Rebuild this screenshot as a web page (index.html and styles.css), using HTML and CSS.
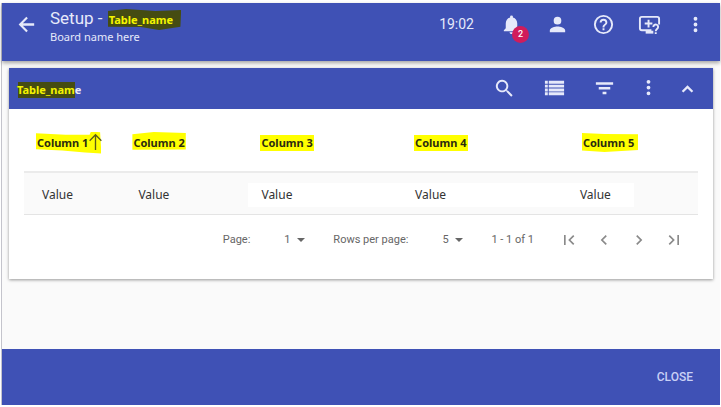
FILE: index.html
```html
<!DOCTYPE html>
<html lang="en">
<head>
<meta charset="utf-8">
<title>Setup</title>
<link rel="stylesheet" href="styles.css">
</head>
<body>
<div class="window">
  <header class="appbar">
    <button class="icon-btn back" aria-label="Back"><svg viewBox="0 0 24 24"><path d="M20 10.800H8.200l5.200-5.200L11.800 4l-8 8 8 8 1.600-1.600-5.200-5.200H20z"/></svg></button>
    <div class="titles">
      <h1>Setup - <span class="mark mark-dark mark-title">Table_name</span></h1>
      <p>Board name here</p>
    </div>
    <time class="clock">19:02</time>
    <nav class="actions">
      <button class="icon-btn bell" aria-label="Notifications"><svg viewBox="0 0 24 24"><path d="M12 22c1.100 0 2-.9 2-2h-4c0 1.100.9 2 2 2zm6-6v-5c0-3.070-1.640-5.640-4.500-6.320V4a1.500 1.500 0 0 0-3 0v.68C7.630 5.360 6 7.920 6 11v5l-2 2v1h16v-1z"/></svg><span class="badge">2</span></button>
      <button class="icon-btn" aria-label="Account"><svg viewBox="0 0 24 24"><path d="M12 12a4 4 0 1 0 0-8 4 4 0 0 0 0 8zm0 2c-2.700 0-8 1.300-8 4v2h16v-2c0-2.700-5.300-4-8-4z"/></svg></button>
      <button class="icon-btn" aria-label="Help"><svg viewBox="0 0 24 24"><path d="M11 18h2v-2h-2zm1-16a10 10 0 1 0 0 20 10 10 0 0 0 0-20zm0 18a8 8 0 1 1 0-16 8 8 0 0 1 0 16zm0-14a4 4 0 0 0-4 4h2a2 2 0 0 1 4 0c0 2-3 1.750-3 5h2c0-2.250 3-2.500 3-5a4 4 0 0 0-4-4z"/></svg></button>
      <button class="icon-btn" aria-label="Screen help"><svg viewBox="0 0 24 24"><g fill="none" stroke="currentColor" stroke-width="2"><path d="M14 18H4a2 2 0 0 1-2-2V6a2 2 0 0 1 2-2h16a2 2 0 0 1 2 2v6M11 7v8M7 11h8"/><path d="M8 20h8" stroke-width="3"/><path d="M16 14.500a2.500 2.500 0 1 1 4 2c-1 .8-1.500 1.100-1.500 2.500M18.500 20v2"/></g></svg></button>
      <button class="icon-btn" aria-label="More"><svg viewBox="0 0 24 24"><path d="M12 8a2 2 0 1 0 0-4 2 2 0 0 0 0 4zm0 2a2 2 0 1 0 0 4 2 2 0 0 0 0-4zm0 6a2 2 0 1 0 0 4 2 2 0 0 0 0-4z"/></svg></button>
    </nav>
  </header>

  <main class="content">
    <section class="panel">
      <div class="panel-head">
        <h2><span class="mark mark-dark mark-panel">Table_nam<span class="plain">e</span></span></h2>
        <div class="tools">
          <button class="icon-btn wide" aria-label="Search"><svg viewBox="0 0 24 24"><path d="M15.500 14h-.8l-.3-.3a6.500 6.500 0 1 0-.7.7l.3.300v.8l5 5 1.500-1.500zm-6 0a4.500 4.500 0 1 1 0-9 4.500 4.500 0 0 1 0 9z"/></svg></button>
          <button class="icon-btn wide" aria-label="List view"><svg viewBox="0 0 24 24"><path d="M2 4h3v3H2zM6 4h16v3H6zM2 8h3v3H2zM6 8h16v3H6zM2 12h3v3H2zM6 12h16v3H6zM2 16h3v3H2zM6 16h16v3H6z"/></svg></button>
          <button class="icon-btn wide" aria-label="Filter"><svg viewBox="0 0 24 24"><path d="M10 18h4v-2.500h-4zM3 5.500V8h18V5.500zm3 7.500h12v-2.500H6z"/></svg></button>
          <button class="icon-btn narrow" aria-label="More"><svg viewBox="0 0 24 24"><path d="M12 7a2 2 0 1 0 0-4 2 2 0 0 0 0 4zm0 2a2 2 0 1 0 0 4 2 2 0 0 0 0-4zm0 6a2 2 0 1 0 0 4 2 2 0 0 0 0-4z"/></svg></button>
          <button class="icon-btn narrow" aria-label="Collapse"><svg viewBox="0 0 24 24"><path d="M12 8.500l-6 6 1.700 1.700 4.300-4.300 4.300 4.300 1.700-1.700z"/></svg></button>
        </div>
      </div>

      <div class="panel-body">
        <table>
          <colgroup><col class="c1"><col class="c2"><col class="c3"><col class="c4"><col class="c5"></colgroup>
          <thead>
            <tr>
              <th class="sorted" aria-sort="ascending"><span class="mark mark-one">Column 1</span><svg class="sort" viewBox="0 0 16 20"><path d="M8 19V2M1.500 8.500L8 2l6.500 6.500"/></svg></th>
              <th><span class="mark mark-two">Column 2</span></th>
              <th><span class="mark">Column 3</span></th>
              <th><span class="mark">Column 4</span></th>
              <th><span class="mark mark-five">Column 5</span></th>
            </tr>
          </thead>
          <tbody>
            <tr>
              <td class="inset">Value</td>
              <td class="inset">Value</td>
              <td><div class="patch">Value</div></td>
              <td><div class="patch">Value</div></td>
              <td><div class="patch patch-end">Value</div></td>
            </tr>
          </tbody>
        </table>

        <div class="pager">
          <label for="page">Page:</label>
          <span class="select"><select id="page"><option>1</option></select></span>
          <label for="rows">Rows per page:</label>
          <span class="select"><select id="rows"><option>5</option></select></span>
          <span class="range">1 - 1 of 1</span>
          <button class="icon-btn" aria-label="First page"><svg viewBox="0 0 24 24"><path d="M18.400 16.600L13.800 12l4.600-4.600L17 6l-6 6 6 6zM6 6h2v12H6z"/></svg></button>
          <button class="icon-btn" aria-label="Previous page"><svg viewBox="0 0 24 24"><path d="M15.400 7.400L14 6l-6 6 6 6 1.400-1.400L10.800 12z"/></svg></button>
          <button class="icon-btn" aria-label="Next page"><svg viewBox="0 0 24 24"><path d="M10 6L8.600 7.400l4.600 4.600-4.600 4.600L10 18l6-6z"/></svg></button>
          <button class="icon-btn" aria-label="Last page"><svg viewBox="0 0 24 24"><path d="M5.600 7.400l4.600 4.600-4.600 4.600L7 18l6-6-6-6zM16 6h2v12h-2z"/></svg></button>
        </div>
      </div>
    </section>
  </main>

  <footer class="footer"><button class="close">CLOSE</button></footer>
</div>
</body>
</html>
```
FILE: styles.css
```css
* { box-sizing: border-box; }

body {
  margin: 0;
  background: #fff;
  font-family: Roboto, sans-serif;
  color: #333;
}

h1, h2, p { margin: 0; }

button {
  border: 0;
  padding: 0;
  background: none;
  color: inherit;
  font: inherit;
}

.window {
  display: flex;
  flex-direction: column;
  min-height: calc(100vh - 5px);
  margin: 3px 1px 2px;
  border-left: 1px solid #c4c4cc;
  background: #fafafa;
}

.icon-btn {
  position: relative;
  display: flex;
  align-items: center;
  justify-content: center;
  width: 46px;
  height: 40px;
}

.icon-btn svg {
  width: 23px;
  height: 23px;
  fill: currentColor;
}

/* Top bar */
.appbar {
  display: flex;
  align-items: flex-start;
  height: 58px;
  padding: 1px 2px 0 0;
  background: #3f51b5;
  color: #e6e9fa;
  box-shadow: 0 2px 4px rgba(0, 0, 0, .35);
}

.back { width: 48px; }

.titles { flex: 1; padding-top: 4px; }

.titles h1 {
  font-size: 17px;
  line-height: 20px;
  font-weight: 400;
}

.titles p {
  font: 11px/18px "Noto Sans", sans-serif;
}

.clock {
  margin-right: 14px;
  font-size: 14px;
  line-height: 40px;
}

.actions { display: flex; }

.badge {
  position: absolute;
  left: 24px;
  top: 22px;
  width: 17px;
  height: 17px;
  border-radius: 50%;
  background: #d01c5b;
  color: #fff;
  font-size: 9px;
  line-height: 17px;
  font-weight: 500;
}

/* Highlighter strokes */
.mark {
  position: relative;
  z-index: 0;
  display: inline-block;
  font: 700 11px/16px "Noto Sans", sans-serif;
  color: #2b2b10;
}

.mark::before {
  content: "";
  position: absolute;
  z-index: -1;
  inset: 0 -1px;
  background: #ffff00;
}

.mark-dark { color: #f4f400; }
.mark-dark::before { background: #454c12; }

.mark-title { margin-left: 2px; }

.mark-title::before {
  inset: -3px -8px -2px -1px;
  clip-path: polygon(0 10%, 25% 0, 65% 9%, 100% 5%, 99% 85%, 70% 100%, 45% 86%, 0 84%);
}

.mark-panel::before { inset: 0 6px 0 1px; }
.plain { color: #e6e9fa; }

.mark-one::before {
  inset: -3px -13px -3px -1px;
  clip-path: polygon(0 8%, 45% 14%, 82% 14%, 84% 0, 98% 3%, 100% 100%, 75% 95%, 40% 86%, 0 80%);
}

.mark-two::before {
  inset: -3px -1px 0;
  clip-path: polygon(0 12%, 40% 0, 100% 5%, 100% 92%, 0 94%);
}

.mark-five::before {
  inset: -2px -4px -1px -1px;
  clip-path: polygon(0 0, 40% 5%, 100% 7%, 100% 90%, 40% 100%, 0 92%);
}

/* Panel */
.content { flex: 1; padding: 7px 7px 16px; }

.panel {
  background: #fff;
  box-shadow: 0 1px 3px rgba(0, 0, 0, .4);
}

.panel-head {
  display: flex;
  align-items: center;
  justify-content: space-between;
  height: 41px;
  padding: 0 6px 0 8px;
  background: #3f51b5;
  color: #e6e9fa;
}

.panel-head h2 { display: flex; padding-top: 2px; }

.tools { display: flex; }
.wide { width: 50px; }
.narrow { width: 39px; }

.panel-body { padding: 0 15px 19px; }

table {
  width: 100%;
  border-collapse: collapse;
  table-layout: fixed;
}

.c1 { width: 14.3%; }
.c2 { width: 19%; }
.c3 { width: 22.8%; }
.c4 { width: 24.9%; }
.c5 { width: 19%; }

th {
  height: 63px;
  padding: 3px 0 0 13px;
  text-align: left;
  vertical-align: middle;
  white-space: nowrap;
}

tbody tr {
  background: #fafafa;
  border-top: 2px solid #ebebeb;
  border-bottom: 1px solid #e4e4e4;
}

td {
  height: 42px;
  padding: 4px 0 0;
  font: 12px/24px "Noto Sans", sans-serif;
}

.inset { padding-left: 18px; }
.patch { padding-left: 13px; background: #fff; }
.patch-end { width: 50%; padding-left: 10px; }

.sort {
  position: relative;
  width: 15px;
  height: 18px;
  vertical-align: middle;
  fill: none;
  stroke: #5c5c18;
  stroke-width: 1.5;
}

/* Pagination */
.pager {
  display: flex;
  align-items: center;
  justify-content: flex-end;
  padding: 5px 7px 0 0;
  font-size: 11px;
  color: #666;
}

.pager .icon-btn {
  width: 35px;
  color: #8a8a8a;
}

.pager .icon-btn svg { width: 20px; height: 20px; }

.select {
  position: relative;
  margin: 0 27px 0 34px;
}

.select::after {
  content: "";
  position: absolute;
  right: 1px;
  top: 5px;
  border: 4px solid transparent;
  border-bottom-width: 0;
  border-top-color: #666;
  pointer-events: none;
}

select {
  appearance: none;
  display: block;
  width: 22px;
  border: 0;
  padding: 0;
  background: none;
  color: inherit;
  font: inherit;
}

.range { margin-right: 17px; }

/* Footer */
.footer {
  display: flex;
  align-items: center;
  justify-content: flex-end;
  height: 56px;
  padding-right: 27px;
  background: #3f51b5;
  color: #c9d0f5;
}

.close { font-size: 12px; line-height: 36px; font-weight: 500; }
```
